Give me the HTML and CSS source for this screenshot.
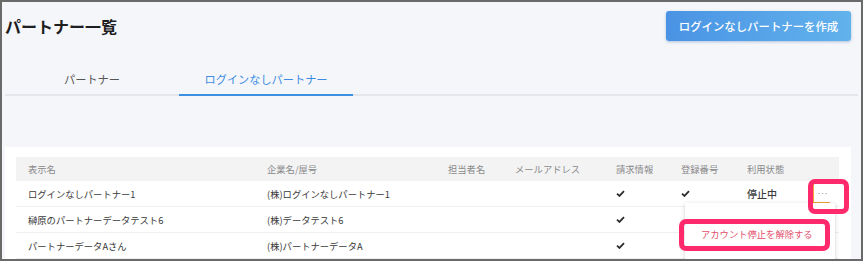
FILE: index.html
```html
<!DOCTYPE html>
<html lang="ja">
<head>
  <meta charset="UTF-8" />
  <meta name="viewport" content="width=device-width, initial-scale=1.0"/>
  <title>パートナー一覧</title>
  <link rel="stylesheet" href="styles.css">
</head>
<body>

  <div class="frame">
    <div class="page">
      <div class="page-head">
        <h1 class="page-title">パートナー一覧</h1>
        <button class="create-btn">ログインなしパートナーを作成</button>
      </div>

      <div class="tabs">
        <div class="tab">パートナー</div>
        <div class="tab active">ログインなしパートナー</div>
      </div>

      <div class="card">
        <table class="partner-table">
          <colgroup>
            <col style="width: 239px">
            <col style="width: 181px">
            <col style="width: 67px">
            <col style="width: 101px">
            <col style="width: 65px">
            <col style="width: 66px">
            <col style="width: 60px">
            <col style="width: 44px">
          </colgroup>
          <thead>
            <tr>
              <th>表示名</th>
              <th>企業名/屋号</th>
              <th>担当者名</th>
              <th>メールアドレス</th>
              <th>請求情報</th>
              <th>登録番号</th>
              <th>利用状態</th>
              <th></th>
            </tr>
          </thead>
          <tbody>
            <tr>
              <td>ログインなしパートナー1</td>
              <td>(株)ログインなしパートナー1</td>
              <td></td>
              <td></td>
              <td><svg class="check" viewBox="0 0 10 8"><path d="M1 4.2 L3.8 6.8 L9 1.2"/></svg></td>
              <td><svg class="check" viewBox="0 0 10 8"><path d="M1 4.2 L3.8 6.8 L9 1.2"/></svg></td>
              <td class="status">停止中</td>
              <td class="actions"><span class="more-btn">···</span></td>
            </tr>
            <tr>
              <td>榊原のパートナーデータテスト6</td>
              <td>(株)データテスト6</td>
              <td></td>
              <td></td>
              <td><svg class="check" viewBox="0 0 10 8"><path d="M1 4.2 L3.8 6.8 L9 1.2"/></svg></td>
              <td></td>
              <td></td>
              <td></td>
            </tr>
            <tr>
              <td>パートナーデータAさん</td>
              <td>(株)パートナーデータA</td>
              <td></td>
              <td></td>
              <td><svg class="check" viewBox="0 0 10 8"><path d="M1 4.2 L3.8 6.8 L9 1.2"/></svg></td>
              <td></td>
              <td></td>
              <td></td>
            </tr>
          </tbody>
        </table>
      </div>
    </div>

    <div class="menu">
      <div class="menu-item">アカウント停止を解除する</div>
    </div>

    <div class="mark mark-more"></div>
    <div class="mark mark-menu"></div>
  </div>

</body>
</html>
```

FILE: styles.css
```css
body {
  margin: 0;
  font-family: "Noto Sans CJK JP", "Noto Sans", sans-serif;
  color: #333;
}

.frame {
  position: relative;
  height: 261px;
  box-sizing: border-box;
  border: 2px solid #6a6a6a;
  background: #f5f6fa;
  overflow: hidden;
}

.page {
  padding: 0 10px 0 3px;
}

.page-head {
  display: flex;
  justify-content: space-between;
  align-items: center;
  height: 45px;
  padding-top: 1px;
}

.page-title {
  margin: 0;
  font-size: 16px;
  font-weight: 700;
  color: #1e1e1e;
}

.create-btn {
  height: 30px;
  width: 185px;
  padding: 0;
  border: none;
  border-radius: 3px;
  background: linear-gradient(90deg, #4a93e4, #62b2ec);
  box-shadow: 0 1px 3px rgba(40, 90, 160, 0.35);
  color: #fff;
  font-family: inherit;
  font-size: 11.4px;
  font-weight: 500;
}

.tabs {
  display: flex;
  margin-top: 16px;
  margin-right: -7px;
  border-bottom: 2px solid #e4e6eb;
}

.tab {
  width: 174px;
  height: 30px;
  line-height: 30px;
  text-align: center;
  font-size: 11.2px;
  color: #555;
  margin-bottom: -2px;
  border-bottom: 2px solid transparent;
}

.tab.active {
  color: #3b8de2;
  border-bottom-color: #3d8fe2;
}

.card {
  margin-top: 51px;
  background: #fff;
  padding: 10px 12px 0 11px;
}

.partner-table {
  width: 823px;
  border-collapse: collapse;
  table-layout: fixed;
  font-size: 9.3px;
}

.partner-table th {
  height: 24px;
  padding: 0 0 0 12px;
  background: #f3f3f4;
  color: #8a8a8a;
  font-weight: 400;
  text-align: left;
}

.partner-table td {
  height: 25px;
  padding: 0 0 0 12px;
  border-bottom: 1px solid #efefef;
  color: #3a3a3a;
  white-space: nowrap;
}

.check {
  display: block;
  width: 9px;
  height: 7px;
}

.check path {
  fill: none;
  stroke: #2b2b2b;
  stroke-width: 2;
}

.status {
  color: #222;
  font-weight: 500;
  font-size: 10px;
}

.partner-table td.actions {
  padding-left: 18px;
}

.more-btn {
  display: block;
  width: 17px;
  height: 19px;
  line-height: 17px;
  text-align: center;
  box-sizing: border-box;
  border-left: 1px solid #f2a33a;
  border-bottom: 1px solid #f2a33a;
  background: #fff;
  color: #888;
  font-size: 8px;
  letter-spacing: -1px;
}

.menu {
  position: absolute;
  left: 683px;
  top: 201px;
  width: 150px;
  height: 70px;
  background: #fff;
  box-shadow: 0 1px 4px rgba(0, 0, 0, 0.18);
  border-radius: 2px;
}

.menu-item {
  padding: 24px 0 0 16px;
  font-size: 9.3px;
  color: #e4506c;
}

.mark {
  position: absolute;
  border: 5px solid #ff2a6c;
  border-radius: 7px;
}

.mark-more {
  left: 806px;
  top: 177px;
  width: 31px;
  height: 25px;
}

.mark-menu {
  left: 677px;
  top: 217px;
  width: 141px;
  height: 22px;
}
```
